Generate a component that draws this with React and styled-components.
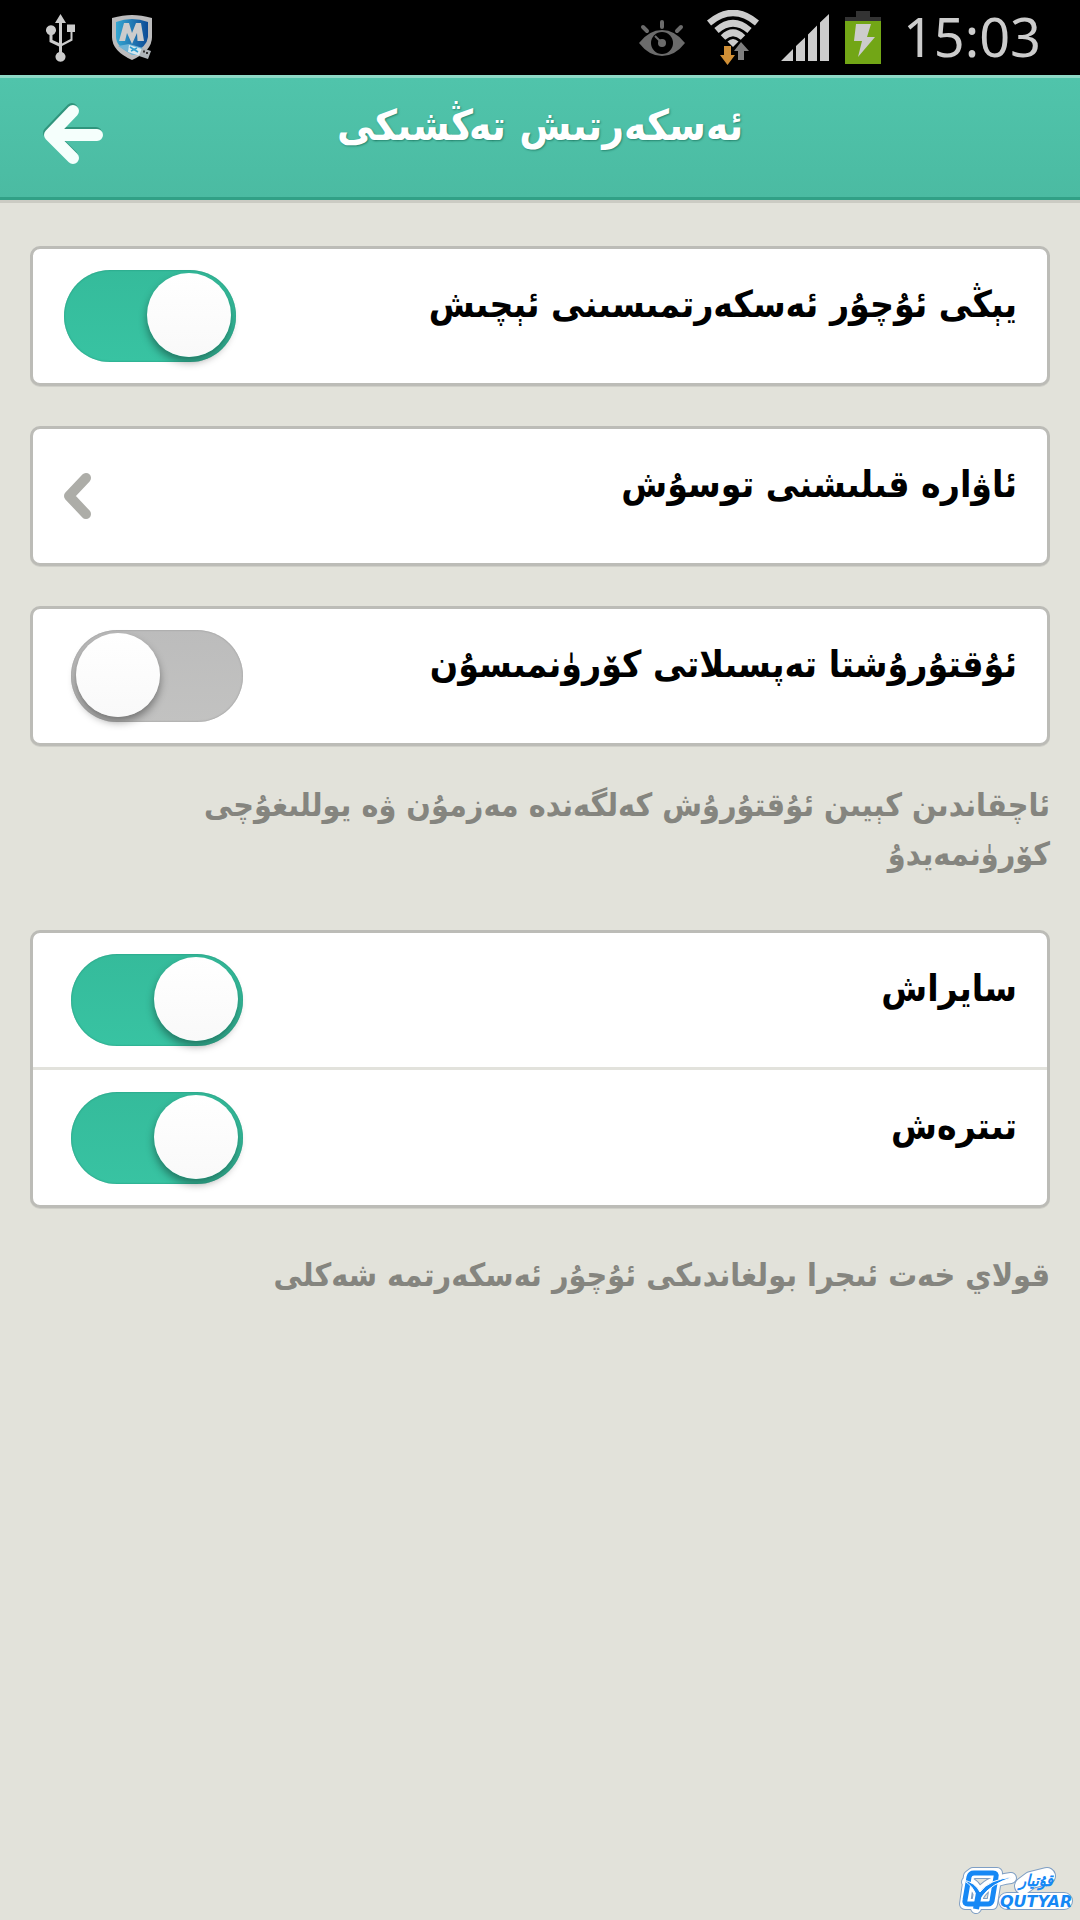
import React from "react";
import styled, { createGlobalStyle } from "styled-components";

const GlobalStyle = createGlobalStyle`
  *, *::before, *::after { box-sizing: border-box; }
  body {
    margin: 0;
    background: #e2e2da;
    font-family: "DejaVu Sans Condensed", "DejaVu Sans", "Noto Sans", sans-serif;
  }
`;

const Page = styled.div`
  display: flex;
  flex-direction: column;
  min-height: 100vh;
`;

const StatusBar = styled.div`
  display: flex;
  align-items: center;
  justify-content: space-between;
  height: 75px;
  padding: 0 39px 0 46px;
  background: #000;
`;

const StatusGroup = styled.div`
  display: flex;
  align-items: center;
  gap: ${(p) => p.$gap}px;
`;

const Clock = styled.time`
  padding-bottom: 4px;
  color: #ccc;
  font: 54px/70px "Noto Sans", sans-serif;
`;

const Header = styled.header`
  display: grid;
  grid-template-columns: 146px 1fr 146px;
  height: 125px;
  border-top: 3px solid #8ed9c6;
  border-bottom: 3px solid #31a086;
  background: linear-gradient(#50c4ab, #4bbba2);
  box-shadow: 0 3px 0 #cbcbc3;
`;

const BackButton = styled.button`
  display: flex;
  align-items: center;
  padding: 0 0 8px 40px;
  border: 0;
  background: none;
  cursor: pointer;
`;

const Title = styled.h1`
  margin: 0;
  padding-top: 18px;
  color: #fff;
  font-size: 42px;
  font-weight: 700;
  line-height: 60px;
  text-align: center;
  text-shadow: 1px 1px 2px rgba(0, 80, 60, 0.5);
`;

const Settings = styled.main`
  display: flex;
  flex-direction: column;
  gap: 40px;
  padding: 46px 30px 0;
`;

const Section = styled.section`
  display: flex;
  flex-direction: column;
  gap: ${(p) => p.$gap}px;
`;

const Card = styled.div`
  border: 3px solid #bcbcb7;
  border-radius: 10px;
  background: #fff;
  box-shadow: 0 1px 0 #cfcfc8;
`;

const Row = styled.div`
  display: flex;
  align-items: center;
  justify-content: space-between;
  height: 134px;
  padding: 0 30px 0 ${(p) => (p.$inset ? 38 : 31)}px;

  & + & {
    height: 138px;
    border-top: 3px solid #e2e2dc;
  }
`;

const LinkRow = styled(Row).attrs({ as: "button", type: "button" })`
  width: 100%;
  border: 0;
  background: none;
  font-family: inherit;
  cursor: pointer;
`;

const Label = styled.span`
  padding-bottom: 22px;
  color: #000;
  font-size: 37px;
  font-weight: 700;
  line-height: 56px;
`;

const Switch = styled.input.attrs({ type: "checkbox" })`
  appearance: none;
  display: flex;
  flex: none;
  align-items: center;
  width: 172px;
  height: 92px;
  margin: 0;
  padding: 0 5px 2px;
  border-radius: 46px;
  background: linear-gradient(#bcbcbc, #c2c2c1);
  box-shadow: inset 0 0 2px #8f8f8f;
  cursor: pointer;

  &::before {
    content: "";
    width: 84px;
    height: 84px;
    border-radius: 50%;
    background: linear-gradient(#fff, #f9f9f9);
    box-shadow: 0 5px 8px rgba(0, 0, 0, 0.4);
  }

  &:checked {
    justify-content: flex-end;
    background: linear-gradient(#35bb9b, #38c3a2);
    box-shadow: inset 0 0 2px #1d8f74;
  }
`;

const Note = styled.p`
  margin: 0;
  padding: 0 0 11px 60px;
  color: #85857f;
  font-size: 32px;
  font-weight: 700;
  line-height: 49px;
`;

const Footer = styled.footer`
  display: flex;
  justify-content: flex-end;
  margin-top: auto;
  padding: 0 5px 4px;
`;

function UsbIcon() {
  return (
    <svg width="30" height="48" viewBox="0 0 30 48" fill="#ccc">
      <path d="M14.500 0 20 9H16V29.500L24.500 25V18H21V10.500H29V18H26.500V26.500L16 32V38A5 5 0 1 1 13 38V32.500L3.500 28V21A5 5 0 1 1 6.500 21V26L13 29V9H9Z" />
    </svg>
  );
}

function ShieldIcon() {
  return (
    <svg width="42" height="48" viewBox="0 0 42 48">
      <defs>
        <linearGradient id="shield" x2="1">
          <stop offset="0" stopColor="#35a7d2" />
          <stop offset="1" stopColor="#0d4b96" />
        </linearGradient>
      </defs>
      <path d="M21 1Q30 1 41 4V23Q41 37 21 46Q1 37 1 23V4Q12 1 21 1Z" fill="#bcbcbd" />
      <path d="M21 5Q29 5 37 8V23Q36 33 21 40Q5 33 5 23V8Q13 5 21 5Z" fill="url(#shield)" />
      <path d="M8 27 13 9H18L21 19 25 9H30L33 27H26.500L26 19 21 30 16 19 14 27Z" fill="#ccc" />
      <path d="M7 32 18 30 32 34 29 41 21 41Z" fill="#6fb4d6" />
      <path d="M18 31 31 35 29 42 17 38Z" fill="#d8e8ee" />
      <path d="M31 34 40 37 37 45 28 42Z" fill="#aeb4b8" />
      <path d="M19 33 27 38M20 37 26 34" stroke="#2f9fd0" strokeWidth="1.500" />
      <path d="M32 37.500h2M35 39h2" stroke="#333" strokeWidth="2" />
    </svg>
  );
}

function EyeIcon() {
  return (
    <svg width="46" height="38" viewBox="0 0 46 38">
      <g stroke="#6b6b6b" strokeWidth="4" strokeLinecap="round">
        <path d="M23 3V8M4 8 8 12M42 8 38 12" />
      </g>
      <path d="M0 24Q10 11 23 11T46 24Q36 37 23 37T0 24Z" fill="#6b6b6b" />
      <circle cx="23" cy="24" r="11" fill="#000" />
      <circle cx="23" cy="24" r="4" fill="#6b6b6b" />
      <path d="M16 17 23 24" stroke="#6b6b6b" strokeWidth="2" />
    </svg>
  );
}

function WifiIcon() {
  return (
    <svg width="52" height="56" viewBox="0 0 52 56">
      <g fill="none" stroke="#ccc" strokeWidth="6.500">
        <path d="M2 13Q26-7 50 13" />
        <path d="M9.500 20.500Q26 6 42.500 20.500" />
        <path d="M16 27.500Q26 18 36 27.500" />
      </g>
      <path d="M20.500 31.500Q26 26.500 31.500 31.500L26 37Z" fill="#ccc" />
      <path d="M17 36H24V45H28L20.500 55 13 45H17Z" fill="#d08f36" />
      <path d="M34 32 42 41H37V50H31V41H27Z" fill="#7f7f7f" />
    </svg>
  );
}

function SignalIcon() {
  return (
    <svg width="48" height="47" viewBox="0 0 48 47" fill="#ccc">
      <path d="M0 47 12 35V47ZM15 32 24 23.500V47H15ZM27 20.500 36 11.500V47H27ZM39 8.500 48 0V47H39Z" />
    </svg>
  );
}

function BatteryIcon() {
  return (
    <svg width="36" height="53" viewBox="0 0 36 53">
      <path d="M11 0H25V6H36V11H0V6H11Z" fill="#333" />
      <path d="M0 10H36V53H0Z" fill="#72a616" />
      <path d="M11 13H26L22 26H30L13 46 17 30H9Z" fill="#ccc" />
    </svg>
  );
}

function BackIcon() {
  return (
    <svg width="64" height="66" viewBox="0 0 64 66" fill="none">
      <g strokeWidth="12" strokeLinecap="round" strokeLinejoin="round">
        <path d="M12 32H56M32 8 9 32 32 55" stroke="#30957d" />
        <path d="M12 34H57M33 10 10 34 33 57" stroke="#f5fffc" />
      </g>
    </svg>
  );
}

function ChevronIcon() {
  return (
    <svg width="28" height="46" viewBox="0 0 28 46" fill="none">
      <path d="M22 5 5 23 22 41" stroke="#adada8" strokeWidth="10" strokeLinecap="round" strokeLinejoin="round" />
    </svg>
  );
}

function QutyarLogo() {
  return (
    <svg width="118" height="50" viewBox="0 0 118 50" role="img" aria-label="QUTYAR">
      <g fill="none" strokeLinejoin="round" strokeLinecap="round">
        <path d="M16 7H40L35 38H8L12 10ZM10 16Q19 18 22 29Q30 15 54 12M22 27 19 42" stroke="#7f9fc4" strokeWidth="12" />
        <path d="M66 20 74 14 90 10M50 35H107" stroke="#7f9fc4" strokeWidth="18" />
        <path d="M16 7H40L35 38H8L12 10ZM10 16Q19 18 22 29Q30 15 54 12M22 27 19 42" stroke="#fff" strokeWidth="10" />
        <path d="M66 20 74 14 90 10M50 35H107" stroke="#fff" strokeWidth="16" />
        <path d="M17 7H36Q40 7 39 11L35 35Q34 38 31 38H11Q7 38 8 34L12 11Q13 7 17 7Z" stroke="#1688f5" strokeWidth="5" />
      </g>
      <path d="M6 14Q18 16 23 26Q32 13 57 11Q34 17 24 32H20Q17 20 6 14Z" fill="#1688f5" stroke="#fff" />
      <path d="M22 27 19 43" stroke="#1688f5" strokeWidth="6" />
      <g fontStyle="italic" fontWeight="700" fill="#1688f5">
        <text x="79" y="20" fontSize="16" textAnchor="middle" direction="rtl">قۇتيار</text>
        <text x="43" y="41" fontSize="16" fontFamily="DejaVu Sans, sans-serif">QUTYAR</text>
      </g>
    </svg>
  );
}

function SwitchRow({ id, label, inset, defaultChecked }) {
  return (
    <Row $inset={inset}>
      <Switch id={id} defaultChecked={defaultChecked} />
      <Label as="label" htmlFor={id} dir="rtl">{label}</Label>
    </Row>
  );
}

export default function App() {
  return (
    <Page lang="ug">
      <GlobalStyle />
      <StatusBar>
        <StatusGroup $gap={35}>
          <UsbIcon />
          <ShieldIcon />
        </StatusGroup>
        <StatusGroup $gap={22}>
          <EyeIcon />
          <WifiIcon />
          <StatusGroup $gap={16}>
            <SignalIcon />
            <BatteryIcon />
          </StatusGroup>
          <Clock>15:03</Clock>
        </StatusGroup>
      </StatusBar>
      <Header>
        <BackButton type="button" aria-label="قايتىش">
          <BackIcon />
        </BackButton>
        <Title dir="rtl">ئەسكەرتىش تەڭشىكى</Title>
      </Header>
      <Settings>
        <Card>
          <SwitchRow id="alerts" label="يېڭى ئۇچۇر ئەسكەرتمىسىنى ئېچىش" defaultChecked />
        </Card>
        <Card>
          <LinkRow>
            <ChevronIcon />
            <Label dir="rtl">ئاۋارە قىلىشنى توسۇش</Label>
          </LinkRow>
        </Card>
        <Section $gap={35}>
          <Card>
            <SwitchRow id="details" label="ئۇقتۇرۇشتا تەپسىلاتى كۆرۈنمىسۇن" inset />
          </Card>
          <Note dir="rtl">ئاچقاندىن كېيىن ئۇقتۇرۇش كەلگەندە مەزمۇن ۋە يوللىغۇچى كۆرۈنمەيدۇ</Note>
        </Section>
        <Section $gap={43}>
          <Card>
            <SwitchRow id="ring" label="سايراش" inset defaultChecked />
            <SwitchRow id="vibrate" label="تىترەش" inset defaultChecked />
          </Card>
          <Note dir="rtl">قولاي خەت ئىجرا بولغاندىكى ئۇچۇر ئەسكەرتمە شەكلى</Note>
        </Section>
      </Settings>
      <Footer>
        <QutyarLogo />
      </Footer>
    </Page>
  );
}
